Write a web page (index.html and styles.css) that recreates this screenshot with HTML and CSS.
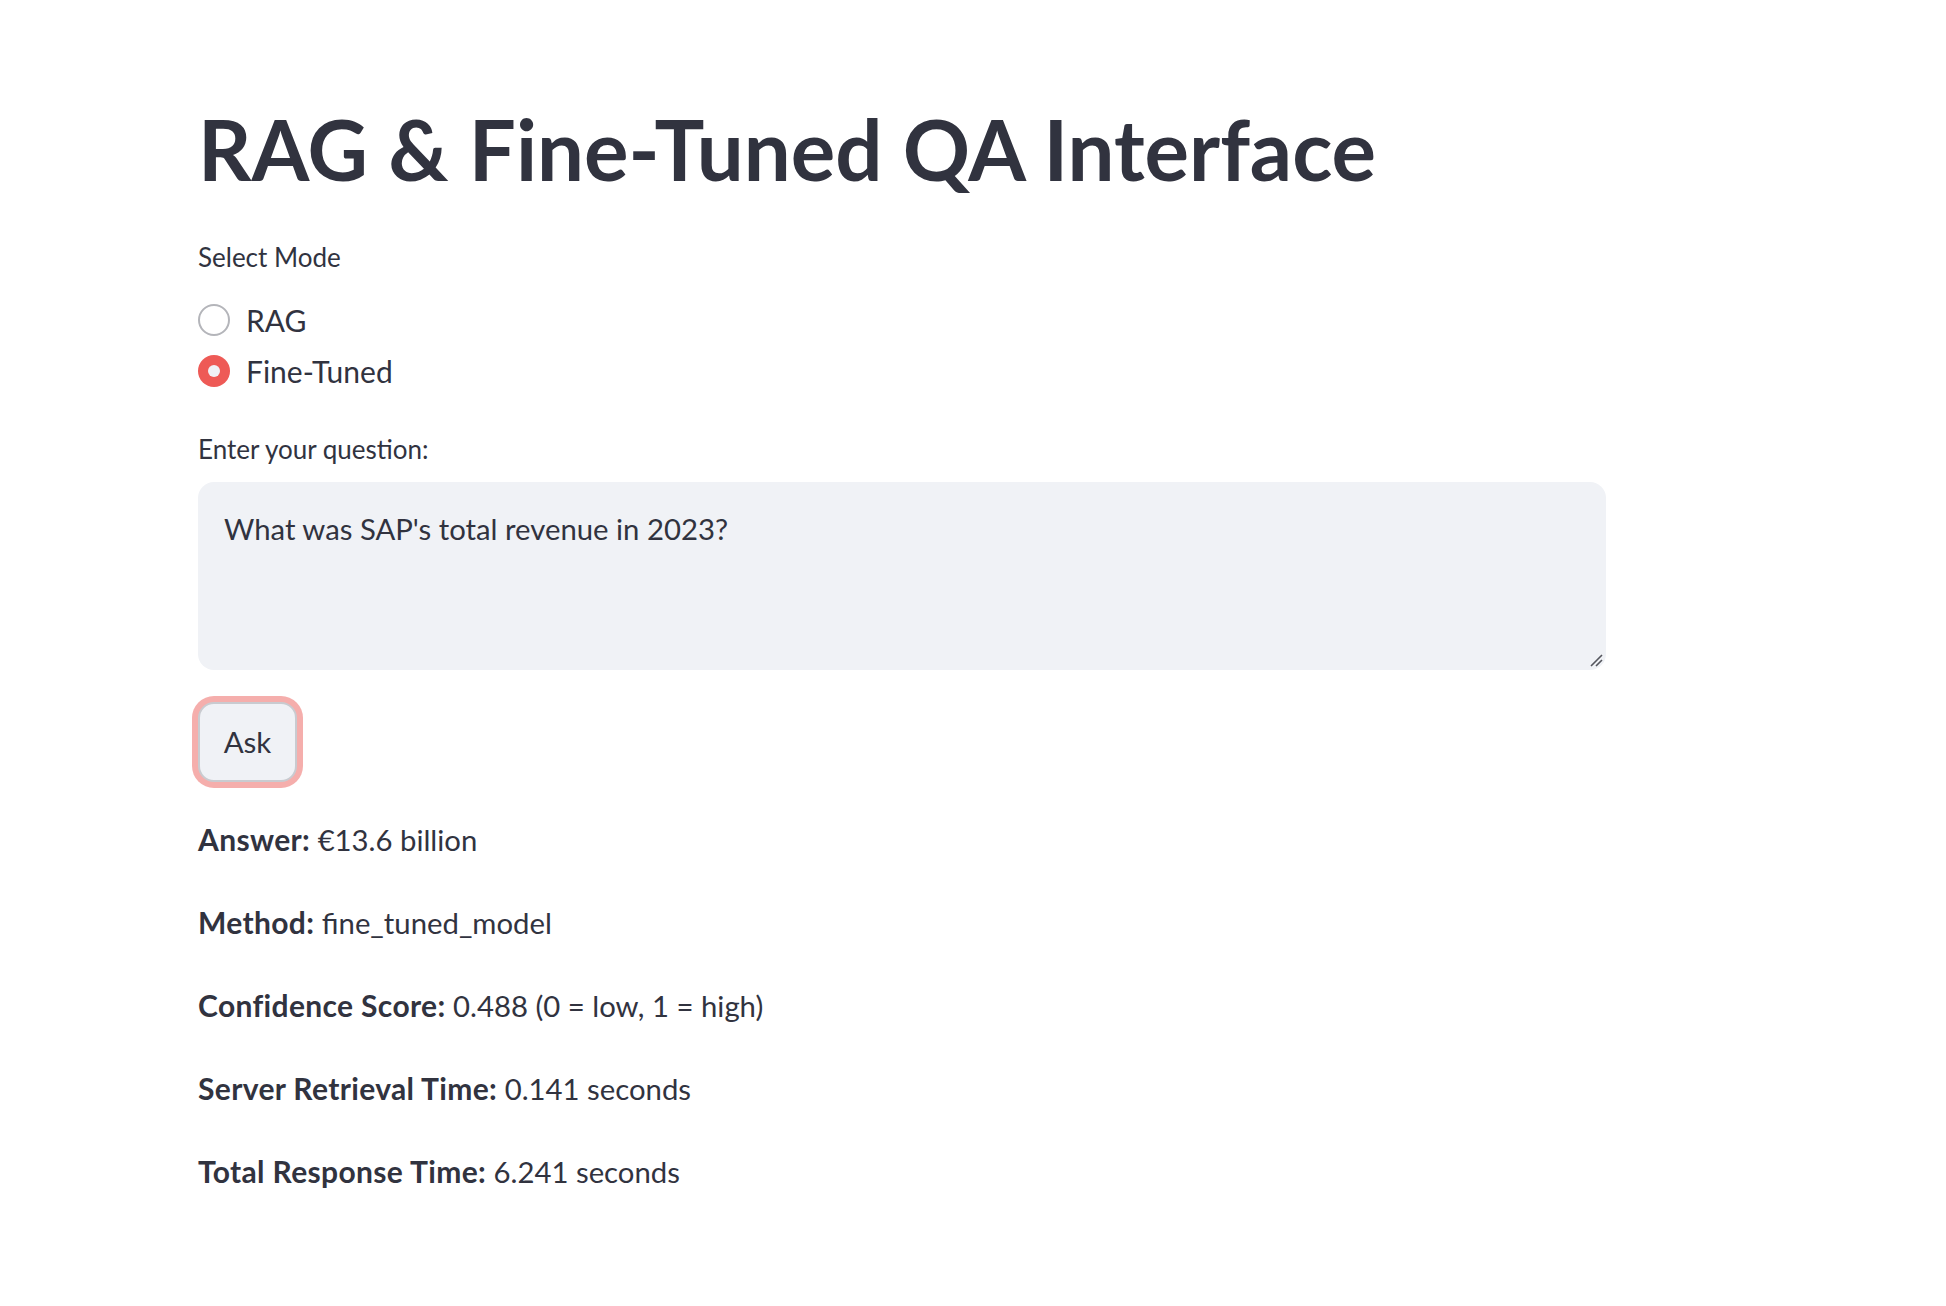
FILE: index.html
```html
<!DOCTYPE html>
<html lang="en">
<head>
<meta charset="utf-8">
<title>RAG &amp; Fine-Tuned QA Interface</title>
<link rel="stylesheet" href="styles.css">
</head>
<body>
<main class="block">
  <h1 class="title">RAG &amp; Fine-Tuned QA Interface</h1>

  <div class="widget-label mode-label">Select Mode</div>
  <div class="radio-group">
    <label class="radio-row">
      <span class="radio"></span>
      <span class="radio-text">RAG</span>
    </label>
    <label class="radio-row">
      <span class="radio radio-checked"><span class="radio-dot"></span></span>
      <span class="radio-text">Fine-Tuned</span>
    </label>
  </div>

  <div class="widget-label question-label">Enter your question:</div>
  <div class="textarea-wrap">
    <textarea class="textarea">What was SAP's total revenue in 2023?</textarea>
    <svg class="resize-grip" width="14" height="14" viewBox="0 0 14 14">
      <path d="M2 13 L13 2 M7 13 L13 7" stroke="#55565e" stroke-width="1.6" fill="none"/>
    </svg>
  </div>

  <button class="ask-btn">Ask</button>

  <div class="results">
    <p class="line"><strong>Answer:</strong> €13.6 billion</p>
    <p class="line"><strong>Method:</strong> fine_tuned_model</p>
    <p class="line"><strong>Confidence Score:</strong> 0.488 (0 = low, 1 = high)</p>
    <p class="line"><strong>Server Retrieval Time:</strong> 0.141 seconds</p>
    <p class="line"><strong>Total Response Time:</strong> 6.241 seconds</p>
  </div>
</main>
</body>
</html>
```
FILE: styles.css
```css
html, body {
  margin: 0;
  padding: 0;
  background: #ffffff;
}

body {
  font-family: "Lato", "Source Sans Pro", sans-serif;
  color: #31333f;
}

.block {
  display: flex;
  flex-direction: column;
  align-items: flex-start;
  width: 1408px;
  padding: 99px 0 0 198px;
  box-sizing: content-box;
}

.title {
  margin: 0;
  font-size: 83.3px;
  font-weight: 700;
  line-height: 100px;
  height: 100px;
  letter-spacing: 0;
  color: #31333f;
}

.widget-label {
  font-size: 26px;
  line-height: 36px;
  height: 36px;
  color: #31333f;
}

.mode-label {
  margin-top: 40px;
}

.radio-group {
  display: flex;
  flex-direction: column;
  margin-top: 19px;
}

.radio-row {
  display: flex;
  align-items: center;
  height: 51px;
  gap: 16px;
}

.radio {
  width: 32px;
  height: 32px;
  box-sizing: border-box;
  border-radius: 50%;
  border: 2px solid #b4b5ba;
  background: #ffffff;
  display: flex;
  align-items: center;
  justify-content: center;
  flex: none;
}

.radio-checked {
  border: none;
  background: #ee5a56;
}

.radio-dot {
  width: 12px;
  height: 12px;
  border-radius: 50%;
  background: #f0f2f6;
}

.radio-text {
  font-size: 30px;
  line-height: 40px;
  color: #31333f;
}

.question-label {
  margin-top: 35px;
}

.textarea-wrap {
  position: relative;
  margin-top: 15px;
  width: 1408px;
  height: 188px;
}

.textarea {
  display: block;
  width: 100%;
  height: 100%;
  box-sizing: border-box;
  margin: 0;
  border: none;
  outline: none;
  border-radius: 16px;
  background: #f0f2f6;
  padding: 26px 26px;
  font-family: "Lato", "Source Sans Pro", sans-serif;
  font-size: 29.3px;
  line-height: 42px;
  color: #31333f;
  resize: none;
}

.resize-grip {
  position: absolute;
  right: 3px;
  bottom: 3px;
  pointer-events: none;
}

.ask-btn {
  margin-top: 32px;
  width: 99px;
  height: 80px;
  box-sizing: border-box;
  border: 2px solid #c9cbd0;
  border-radius: 16px;
  background: #f0f2f6;
  box-shadow: 0 0 0 6px #f5aeac;
  font-family: "Lato", "Source Sans Pro", sans-serif;
  font-size: 29.5px;
  line-height: 40px;
  color: #31333f;
  padding: 0;
}

.results {
  margin-top: 36px;
  display: flex;
  flex-direction: column;
  gap: 41px;
}

.line {
  margin: 0;
  height: 42px;
  font-size: 29.3px;
  line-height: 42px;
  color: #31333f;
}

.line strong {
  font-weight: 700;
  font-size: 30px;
  line-height: 42px;
  letter-spacing: 0.35px;
}
```
